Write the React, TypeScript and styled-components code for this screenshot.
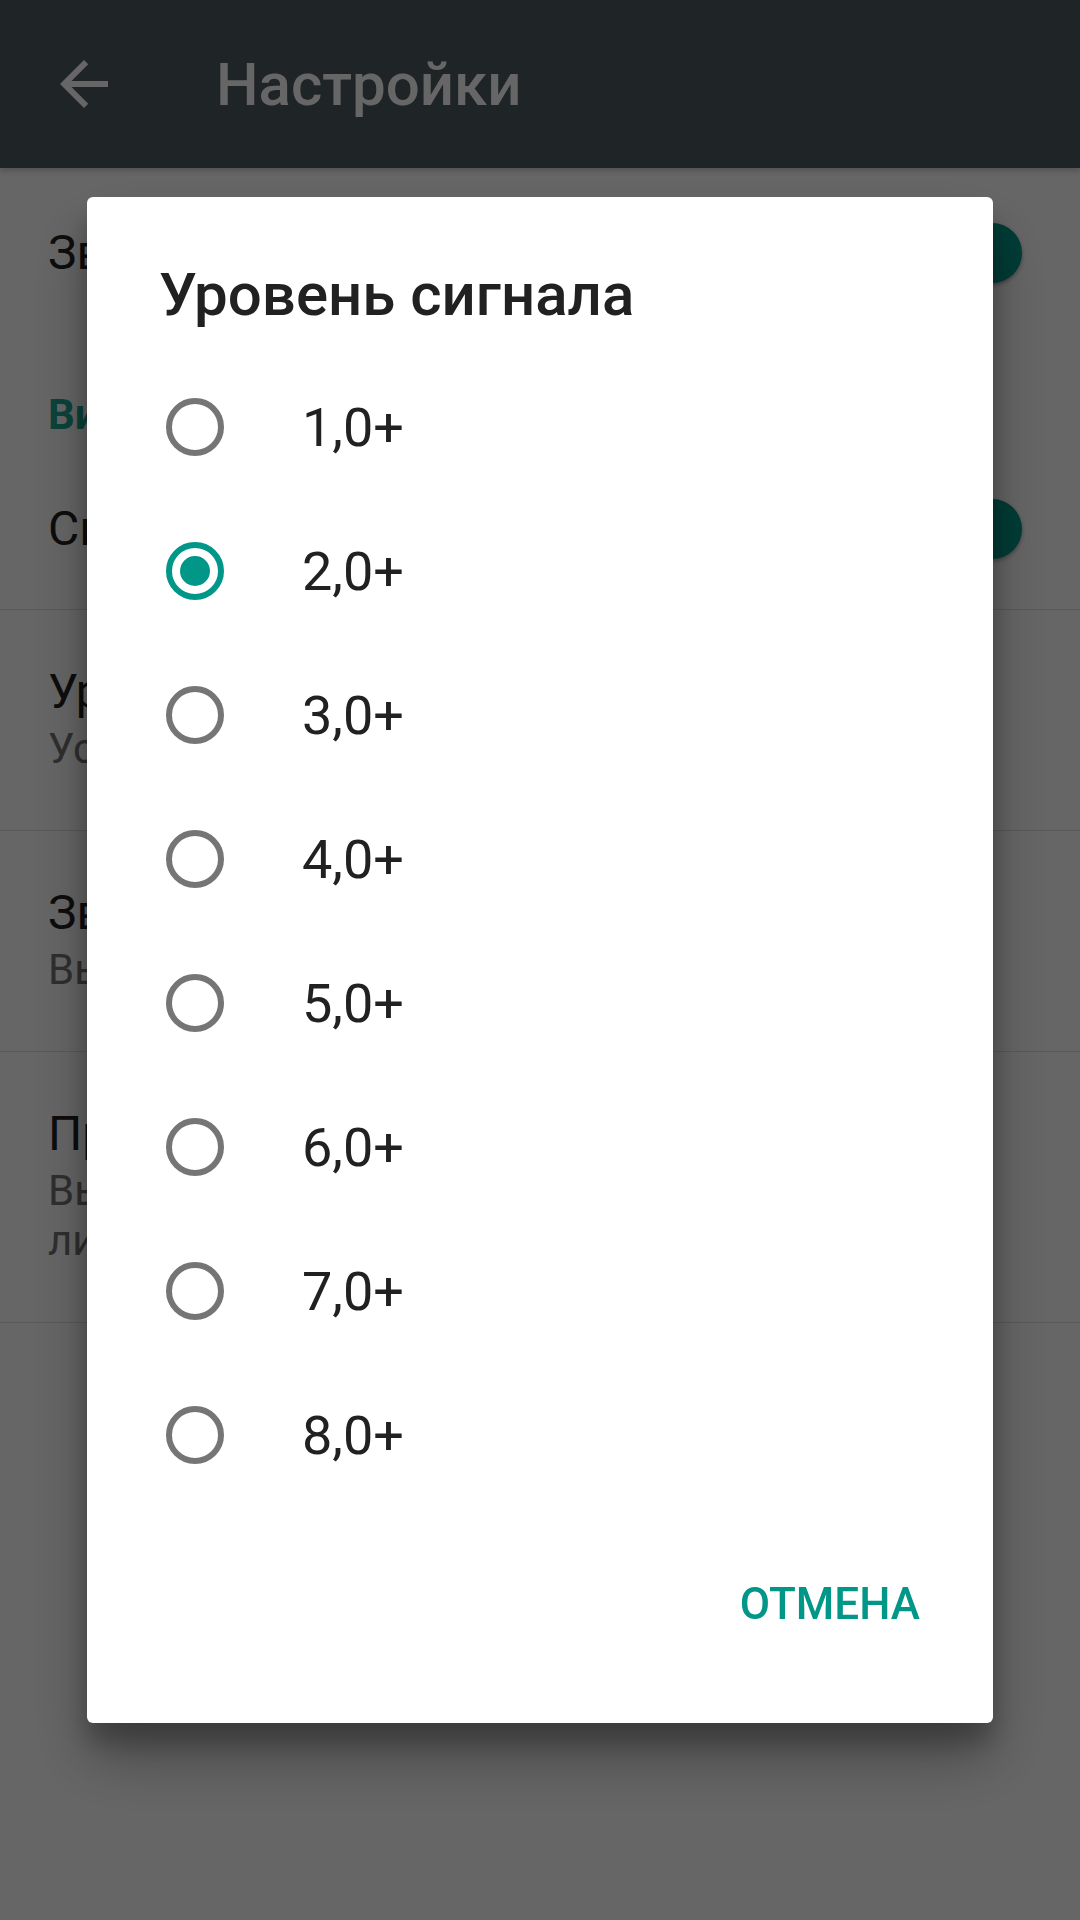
import styled, { createGlobalStyle } from "styled-components"

const GlobalStyle = createGlobalStyle`
  html, body {
    margin: 0;
    padding: 0;
    background: #ffffff;
  }
  body {
    width: 1080px;
    height: 1920px;
    overflow: hidden;
    font-family: Roboto, "Noto Sans", sans-serif;
  }
`

const settings = [
  { title: "Звук", switch: true },
  { header: "Вибрация" },
  { title: "Сигнал", switch: true },
  { title: "Уровень", subtitle: "Установлено 2,0+" },
  { title: "Звук", subtitle: "Выбор мелодии" },
  { title: "Приоритет", subtitle: "Выбор приоритета", more: "линии" },
]

const levels = ["1,0+", "2,0+", "3,0+", "4,0+", "5,0+", "6,0+", "7,0+", "8,0+"]

export default function App() {
  return (
    <>
      <GlobalStyle />
      <Screen>
        <AppBar>
          <IconBox>
            <svg width="72" height="72" viewBox="0 0 24 24">
              <path fill="#ffffff" d="M20 11H7.83l5.59-5.59L12 4l-8 8 8 8 1.41-1.41L7.83 13H20v-2z" />
            </svg>
          </IconBox>
          <BarTitle>Настройки</BarTitle>
        </AppBar>
        <SettingsList>
          {settings.map((s, i) =>
            s.header ? (
              <SectionHeader key={i}>{s.header}</SectionHeader>
            ) : s.switch ? (
              <SwitchRow key={i} $first={i === 0}>
                <PrefTitle>{s.title}</PrefTitle>
                <SwitchTrack>
                  <SwitchThumb />
                </SwitchTrack>
              </SwitchRow>
            ) : (
              <PrefRow key={i}>
                <PrefTitle>{s.title}</PrefTitle>
                <PrefSummary>{s.subtitle}</PrefSummary>
                {s.more && <PrefSummary>{s.more}</PrefSummary>}
              </PrefRow>
            )
          )}
        </SettingsList>
      </Screen>
      <Scrim />
      <Dialog>
        <DialogTitle>Уровень сигнала</DialogTitle>
        <OptionList>
          {levels.map((l) => (
            <Option key={l}>
              <Radio $checked={l === "2,0+"} />
              <OptionLabel>{l}</OptionLabel>
            </Option>
          ))}
        </OptionList>
        <ButtonBar>
          <TextButton>Отмена</TextButton>
        </ButtonBar>
      </Dialog>
    </>
  )
}

const Screen = styled.div`
  display: flex;
  flex-direction: column;
`

const AppBar = styled.header`
  height: 168px;
  background: #4e5a62;
  display: flex;
  align-items: center;
  padding-left: 48px;
  gap: 24px;
  box-shadow: 0 3px 6px rgba(0, 0, 0, 0.2);
`

const IconBox = styled.div`
  width: 72px;
  height: 72px;
  display: flex;
`

const BarTitle = styled.h1`
  margin: 0 0 0 72px;
  font-size: 60px;
  font-weight: 500;
  color: #ffffff;
`

const SettingsList = styled.div`
  display: flex;
  flex-direction: column;
`

const SectionHeader = styled.div`
  padding: 49px 48px 6px;
  line-height: 56px;
  font-size: 42px;
  font-weight: 700;
  color: #1aa894;
`

const SwitchRow = styled.div<{ $first?: boolean }>`
  height: ${(p) => (p.$first ? 170 : 160)}px;
  padding: 0 67px 0 48px;
  display: flex;
  align-items: center;
  justify-content: space-between;
  border-bottom: ${(p) => (p.$first ? "none" : "1px solid #e0e0e0")};
`

const PrefRow = styled.div`
  padding: 50px 48px 56px;
  display: flex;
  flex-direction: column;
  border-bottom: 1px solid #e0e0e0;
`

const PrefTitle = styled.div`
  font-size: 48px;
  line-height: 64px;
  color: #212121;
  white-space: nowrap;
`

const PrefSummary = styled.div`
  font-size: 42px;
  line-height: 50px;
  color: #757575;
  white-space: nowrap;
`

const SwitchTrack = styled.div`
  position: relative;
  width: 102px;
  height: 42px;
  border-radius: 21px;
  background: #80cbc4;
`

const SwitchThumb = styled.span`
  position: absolute;
  right: -9px;
  top: -9px;
  width: 60px;
  height: 60px;
  border-radius: 50%;
  background: #009688;
  box-shadow: 0 2px 4px rgba(0, 0, 0, 0.35);
`

const Scrim = styled.div`
  position: fixed;
  inset: 0;
  background: rgba(0, 0, 0, 0.6);
`

const Dialog = styled.div`
  position: fixed;
  left: 87px;
  top: 197px;
  width: 906px;
  height: 1526px;
  background: #ffffff;
  border-radius: 6px;
  display: flex;
  flex-direction: column;
  box-shadow: 0 36px 60px rgba(0, 0, 0, 0.3), 0 20px 24px rgba(0, 0, 0, 0.22);
`

const DialogTitle = styled.h2`
  margin: 0;
  padding: 58px 72px 0;
  font-size: 60px;
  line-height: 80px;
  font-weight: 500;
  color: #212121;
`

const OptionList = styled.div`
  margin-top: 20px;
  display: flex;
  flex-direction: column;
`

const Option = styled.div`
  height: 144px;
  padding-left: 79px;
  display: flex;
  align-items: center;
  gap: 78px;
`

const Radio = styled.span<{ $checked: boolean }>`
  box-sizing: border-box;
  width: 58px;
  height: 58px;
  flex-shrink: 0;
  border-radius: 50%;
  border: 6px solid ${(p) => (p.$checked ? "#009688" : "#757575")};
  display: flex;
  align-items: center;
  justify-content: center;

  &::after {
    content: "";
    display: ${(p) => (p.$checked ? "block" : "none")};
    width: 30px;
    height: 30px;
    border-radius: 50%;
    background: #009688;
  }
`

const OptionLabel = styled.span`
  font-size: 54px;
  color: #212121;
`

const ButtonBar = styled.div`
  margin-top: auto;
  padding: 0 49px 71px;
  display: flex;
  justify-content: flex-end;
`

const TextButton = styled.button`
  height: 96px;
  padding: 0 24px;
  border: none;
  background: none;
  font-family: Roboto, "Noto Sans", sans-serif;
  font-size: 44px;
  font-weight: 500;
  text-transform: uppercase;
  color: #009688;
`
